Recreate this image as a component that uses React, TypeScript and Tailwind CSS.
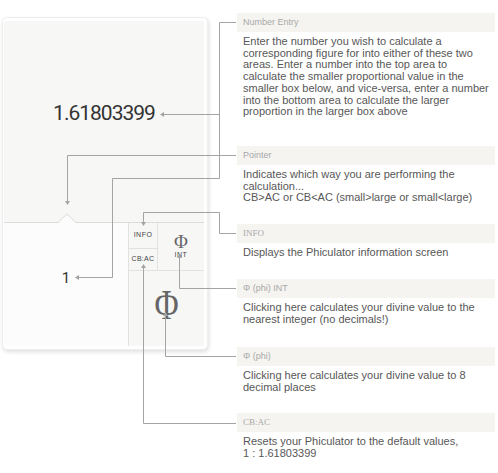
import React from "react"

const LINE = "#a4a4a4"

function Arrow({ x, y, dir }: { x: number; y: number; dir: "left" | "up" | "down" }) {
    let pts = ""
    if (dir === "left") pts = `${x},${y} ${x + 4},${y - 2.5} ${x + 4},${y + 2.5}`
    if (dir === "up") pts = `${x},${y} ${x - 2.5},${y + 4} ${x + 2.5},${y + 4}`
    if (dir === "down") pts = `${x},${y} ${x - 2.5},${y - 4} ${x + 2.5},${y - 4}`
    return <polygon points={pts} fill={LINE} />
}

function Connectors() {
    return (
        <svg className="absolute inset-0 pointer-events-none" width="498" height="473" viewBox="0 0 498 473">
            <g fill="none" stroke={LINE} strokeWidth="1">
                {/* number entry */}
                <polyline points="236,22.5 219.5,22.5 219.5,178.5 112.5,178.5 112.5,277.5 78,277.5" />
                <polyline points="219.5,114.5 163,114.5" />
                {/* pointer */}
                <polyline points="236,155.5 67.5,155.5 67.5,201" />
                {/* info */}
                <polyline points="236,233.5 219.5,233.5 219.5,212.5 143.5,212.5 143.5,222" />
                {/* phi int */}
                <polyline points="236,288.5 179.5,288.5 179.5,258" />
                {/* phi */}
                <polyline points="236,356.5 165.5,356.5 165.5,316" />
                {/* cb:ac */}
                <polyline points="236,423.5 143.5,423.5 143.5,268" />
            </g>
            <Arrow x={75} y={277.5} dir="left" />
            <Arrow x={160} y={114.5} dir="left" />
            <Arrow x={67.5} y={205} dir="down" />
            <Arrow x={143.5} y={226} dir="down" />
            <Arrow x={179.5} y={254} dir="up" />
            <Arrow x={165.5} y={312} dir="up" />
            <Arrow x={143.5} y={264} dir="up" />
        </svg>
    )
}

function Note({ title, serif, height, children }: { title: string; serif?: boolean; height: string; children: React.ReactNode }) {
    return (
        <div className={height}>
            <div className={`h-[19px] bg-[#f5f4f1] px-[6px] flex items-center text-[9px] text-[#a8a8a8] ${serif ? "font-['Liberation_Serif',serif]" : ""}`}>
                {title}
            </div>
            <p className="mt-[4px] px-[6px] text-[11px] leading-[11.7px] text-[#575757] whitespace-nowrap">
                {children}
            </p>
        </div>
    )
}

export default function App() {
    return (
        <div className="relative w-[498px] h-[473px] bg-white flex overflow-hidden font-['Liberation_Sans',Arial,sans-serif]">
            <div className="w-[237px] shrink-0 pt-[17px] pl-[2px]">
                <div className="w-[206px] h-[333px] rounded-[5px] bg-white border border-[#efefef] shadow-[1px_2px_4px_rgba(0,0,0,0.13)] pt-[3px] pl-[1px] pr-[3px] pb-[4px]">
                    <div className="h-[201px] bg-[#f7f7f6] flex items-center justify-center pb-[16px]">
                        <span className="font-['Roboto',sans-serif] text-[21px] tracking-[-1px] text-[#333]">1.61803399</span>
                    </div>
                    <div className="relative h-[124px] border-t border-[#dcdcdc] bg-[#fcfcfc] flex">
                        <svg className="absolute left-[54px] top-[-10px]" width="18" height="10" viewBox="0 0 18 10">
                            <polygon points="0,10 9,1.5 18,10" fill="#fcfcfc" />
                            <polyline points="0,9.5 9,1 18,9.5" fill="none" stroke="#dcdcdc" strokeWidth="1" />
                        </svg>
                        <div className="flex-1 flex items-center justify-center pb-[12px]">
                            <span className="font-['Roboto',sans-serif] text-[15px] text-[#333]">1</span>
                        </div>
                        <div className="w-[76px] border-l border-[#e2e2e2] bg-[#f7f7f6] flex flex-col">
                            <div className="flex h-[48px] border-b border-[#e2e2e2]">
                                <div className="w-[29px] border-r border-[#e2e2e2] flex flex-col">
                                    <div className="h-[26px] border-b border-[#e2e2e2] flex items-center justify-center text-[7px] tracking-[0.5px] text-[#444]">
                                        INFO
                                    </div>
                                    <div className="flex-1 flex items-center justify-center text-[7px] tracking-[0.3px] text-[#444]">
                                        CB:AC
                                    </div>
                                </div>
                                <div className="flex-1 flex flex-col items-center justify-center">
                                    <span className="font-['Liberation_Serif',serif] text-[19px] leading-[16px] text-[#666]">Φ</span>
                                    <span className="text-[7px] leading-[10px] tracking-[0.5px] text-[#444]">INT</span>
                                </div>
                            </div>
                            <div className="flex-1 flex items-center justify-center pb-[8px]">
                                <span className="font-['Liberation_Serif',serif] text-[33px] leading-[36px] text-[#666] scale-y-125">Φ</span>
                            </div>
                        </div>
                    </div>
                </div>
            </div>
            <div className="w-[258px] shrink-0 pt-[13px] flex flex-col">
                <Note title="Number Entry" height="h-[133px]">
                    Enter the number you wish to calculate a<br />
                    corresponding figure for into either of these two<br />
                    areas. Enter a number into the top area to<br />
                    calculate the smaller proportional value in the<br />
                    smaller box below, and vice-versa, enter a number<br />
                    into the bottom area to calculate the larger<br />
                    proportion in the larger box above
                </Note>
                <Note title="Pointer" height="h-[78px]">
                    Indicates which way you are performing the<br />
                    calculation...<br />
                    CB&gt;AC or CB&lt;AC (small&gt;large or small&lt;large)
                </Note>
                <Note title="INFO" serif height="h-[55px]">
                    Displays the Phiculator information screen
                </Note>
                <Note title="Φ (phi) INT" height="h-[68px]">
                    Clicking here calculates your divine value to the<br />
                    nearest integer (no decimals!)
                </Note>
                <Note title="Φ (phi)" height="h-[66px]">
                    Clicking here calculates your divine value to 8<br />
                    decimal places
                </Note>
                <Note title="CB:AC" serif height="h-[60px]">
                    Resets your Phiculator to the default values,<br />
                    1 : 1.61803399
                </Note>
            </div>
            <Connectors />
        </div>
    )
}
